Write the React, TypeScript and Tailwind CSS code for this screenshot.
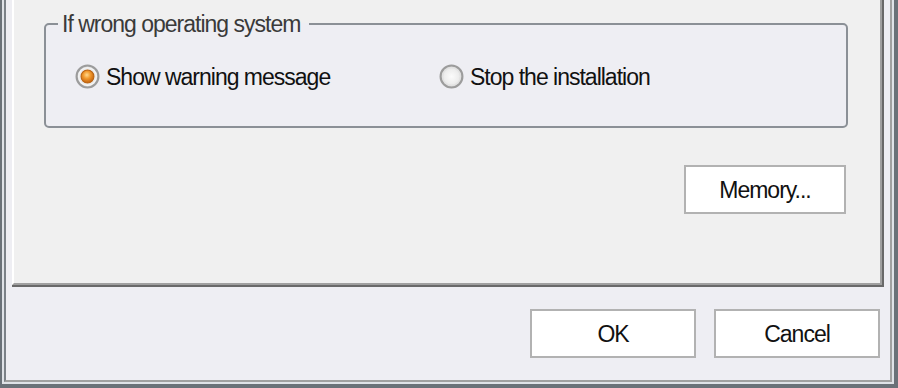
import React from 'react';

// Radio glyph drawn like the classic Windows 7 style option button.
const RadioMark: React.FC<{ checked: boolean; id: string }> = ({ checked, id }) => (
  <svg width="25" height="25" viewBox="0 0 24 24" className="shrink-0">
    <defs>
      <radialGradient id={`${id}-bg`} cx="0.5" cy="0.5" r="0.5">
        <stop offset="0" stopColor="#fbfbfb" />
        <stop offset="0.7" stopColor="#ececec" />
        <stop offset="1" stopColor="#d0d0d0" />
      </radialGradient>
      <radialGradient id={`${id}-dot`} cx="0.45" cy="0.38" r="0.62">
        <stop offset="0" stopColor="#ffd98e" />
        <stop offset="0.45" stopColor="#f29a2e" />
        <stop offset="1" stopColor="#c2610e" />
      </radialGradient>
    </defs>
    <circle cx="12" cy="12" r="10.5" fill={`url(#${id}-bg)`} stroke="#9c9c9c" strokeWidth="2" />
    <circle cx="12" cy="12" r="8.5" fill="none" stroke={checked ? '#f7f7f7' : '#e2e2e2'} strokeWidth="1" />
    {checked && <circle cx="12" cy="12" r="6.2" fill={`url(#${id}-dot)`} stroke="#b9620f" strokeWidth="1" />}
  </svg>
);

const Radio: React.FC<{ label: string; checked?: boolean; id: string; className?: string }> = ({
  label,
  checked = false,
  id,
  className = '',
}) => (
  <label className={`flex items-center gap-[6px] h-[25px] ${className}`}>
    <RadioMark checked={checked} id={id} />
    <span className="text-[23px] leading-[24px] tracking-[-1px] text-[#111] whitespace-nowrap">{label}</span>
  </label>
);

const DlgButton: React.FC<{ children: React.ReactNode; className?: string }> = ({ children, className = '' }) => (
  <button
    type="button"
    className={`h-[49px] bg-white border-2 border-[#b2b2b2] text-[23px] leading-[24px] tracking-[-1px] text-[#111] ${className}`}
  >
    {children}
  </button>
);

export default function App() {
  return (
    <div className="w-[898px] h-[388px] flex bg-[#dfe2e7] border-l-2 border-r-4 border-b-4 border-[#6a7178] pl-[2px] pr-[2px] pb-[2px] font-['Liberation_Sans',Arial,sans-serif] select-none">
      <div className="flex-1 flex flex-col bg-[#eeeef3] border-l-2 border-l-[#7b8187] border-r-2 border-b-2 border-r-[#a0a0a0] border-b-[#a0a0a0]">
        {/* tab page */}
        <div className="mx-[6px] h-[287px] border-r-2 border-b-2 border-[#696969]">
          <div className="h-full flex flex-col bg-[#f0f0f0] border-l-2 border-l-white border-r-2 border-b-2 border-r-[#a0a0a0] border-b-[#a0a0a0]">
            <fieldset className="ml-[30px] mt-[12px] w-[804px] h-[116px] border-2 border-[#8b9096] rounded-[5px] bg-[#eeeef3] min-w-0">
              <legend className="ml-[12px] pl-[4px] pr-[9px] text-[23px] leading-[24px] tracking-[-1px] text-[#3a3a3a]">
                If wrong operating system
              </legend>
              <div className="flex mt-[28px] pl-[29px]">
                <Radio id="r1" label="Show warning message" checked className="w-[364px]" />
                <Radio id="r2" label="Stop the installation" />
              </div>
            </fieldset>
            <DlgButton className="self-end mr-[34px] mt-[37px] w-[162px]">Memory...</DlgButton>
          </div>
        </div>
        {/* dialog buttons */}
        <div className="flex justify-end gap-[18px] pr-[10px] mt-[22px]">
          <DlgButton className="w-[166px]">OK</DlgButton>
          <DlgButton className="w-[166px]">Cancel</DlgButton>
        </div>
      </div>
    </div>
  );
}
